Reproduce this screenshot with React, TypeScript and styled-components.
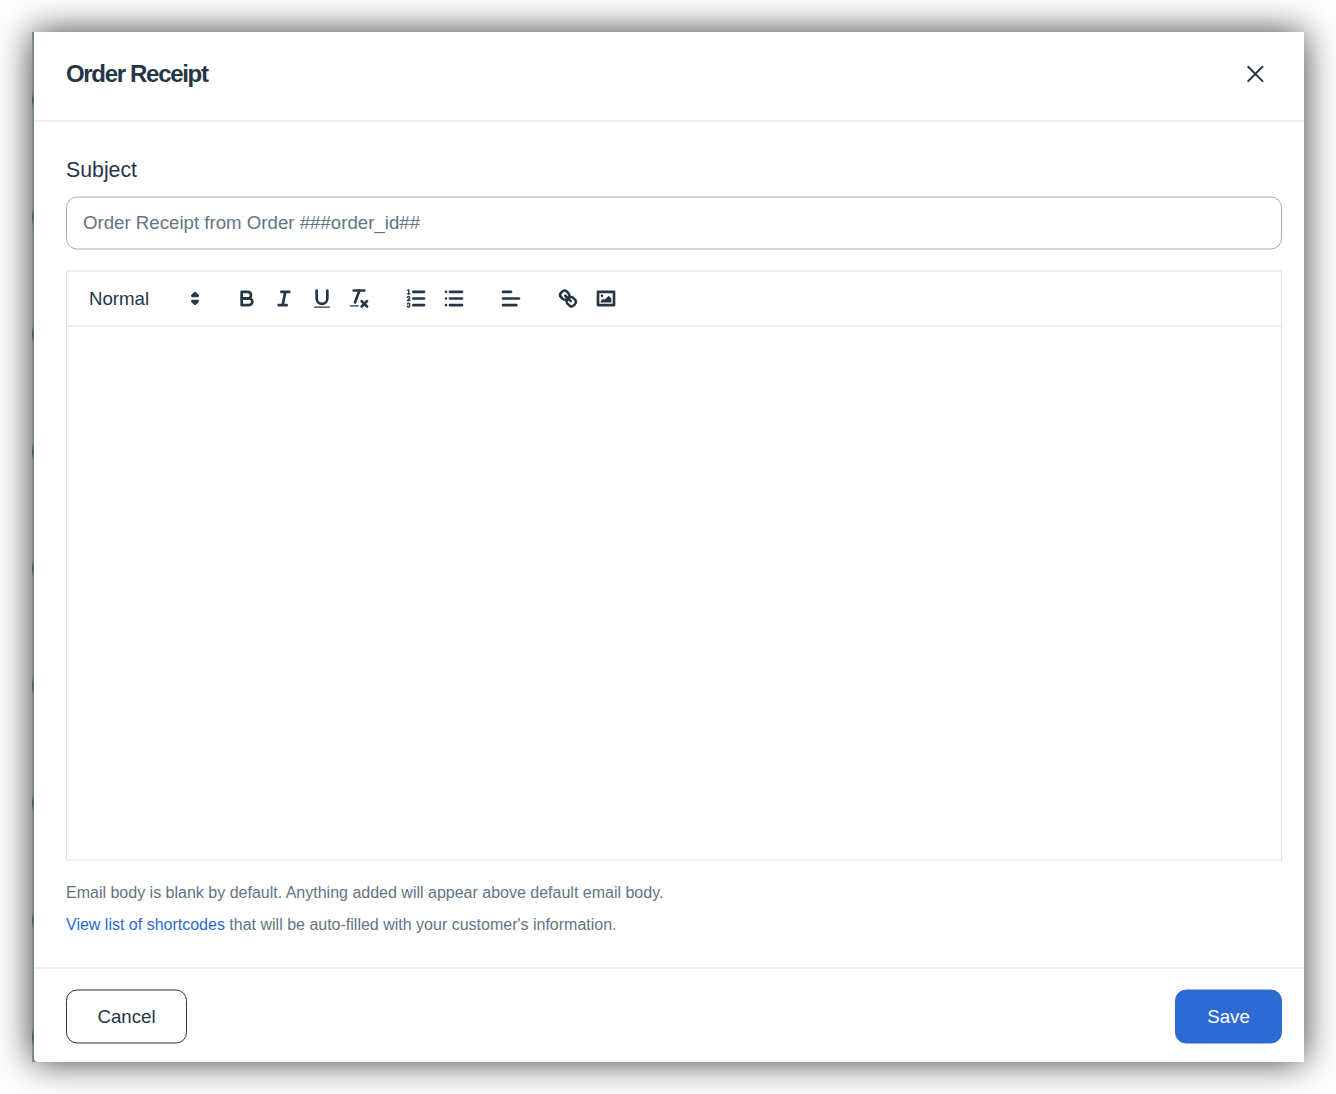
import React from "react";
import styled, { createGlobalStyle } from "styled-components";

const ink = "#263645";
const muted = "#627486";

const GlobalStyle = createGlobalStyle`
  * { box-sizing: border-box; }
  body {
    margin: 0;
    background: #fff;
    overflow: hidden;
    font-family: "Liberation Sans", Arial, Helvetica, sans-serif;
    color: ${ink};
  }
  button { font: inherit; }
`;

const Page = styled.div`
  height: 1094px;
  padding: 32px;
`;

const Backdrop = styled.div`
  height: 1030px;
  padding-left: 2px;
  background:
    radial-gradient(ellipse 3px 9px at 0px 68px, #4b5962 20%, transparent 100%) 0 0 / 2px 117.2px repeat-y,
    #7f888e;
  box-shadow: 0 0 34px rgba(0, 0, 0, 0.77);
`;

const Dialog = styled.section`
  display: flex;
  flex-direction: column;
  height: 100%;
  background: #fff;
  border-radius: 1px 0 0 4px;
`;

const Header = styled.header`
  display: flex;
  align-items: center;
  justify-content: space-between;
  height: 90px;
  padding: 0 38px 4px 32px;
  border-bottom: 2px solid #eeeff1;
`;

const Title = styled.h1`
  margin: 0;
  font-size: 24px;
  line-height: 32px;
  font-weight: 700;
  letter-spacing: -1.32px;
`;

const CloseButton = styled.button`
  display: flex;
  padding: 0;
  border: 0;
  background: none;
  color: ${ink};
`;

const Body = styled.main`
  flex: 1;
  padding: 34px 22px 0 32px;
`;

const Label = styled.label`
  display: block;
  height: 40px;
  font-size: 21.3px;
  line-height: 28px;
`;

const SubjectInput = styled.input`
  display: block;
  width: 100%;
  height: 53px;
  margin-bottom: 21px;
  padding: 0 16px 2px;
  border: 1px solid #a3aeb9;
  border-radius: 11px;
  outline: none;
  background: #fff;
  font: 18.67px "Liberation Sans", Arial, sans-serif;
  color: ${muted};
  transform: translateY(0.5px);
  &::placeholder { color: ${muted}; opacity: 1; }
`;

const Editor = styled.div`
  height: 591px;
  border: solid;
  border-width: 2px 1px;
  border-color: #eeeff1 #dee1e7;
`;

const Toolbar = styled.div`
  display: flex;
  align-items: center;
  height: 55px;
  padding-left: 22px;
  border-bottom: 2px solid #eeeff1;
`;

const FormatPicker = styled.button`
  display: flex;
  align-items: center;
  justify-content: space-between;
  width: 118px;
  margin-right: 21.4px;
  padding: 0;
  border: 0;
  background: none;
  color: ${ink};
  font-size: 18.67px;
`;

const ToolGroup = styled.div`
  display: flex;
  margin-right: 20px;
`;

const ToolButton = styled.button`
  display: flex;
  align-items: center;
  justify-content: center;
  width: 37.34px;
  height: 32px;
  padding: 0;
  border: 0;
  background: none;
  color: ${ink};
`;

const Glyph = styled.svg.attrs({ viewBox: "0 0.4 18 18" })`
  display: block;
  width: 24px;
  height: 24px;
  fill: none;
  stroke: currentColor;
  stroke-width: 2;
  stroke-linecap: round;
  stroke-linejoin: round;
  .fill { fill: currentColor; stroke: none; }
  .both { fill: currentColor; }
  .thin { stroke-width: 1; }
`;

const HelpText = styled.div`
  margin-top: 16px;
  font-size: 16px;
  line-height: 32px;
  color: ${muted};
`;

const HelpLine = styled.p`
  margin: 0;
`;

const HelpLink = styled.a`
  color: #2c68d3;
  text-decoration: none;
`;

const Footer = styled.footer`
  display: flex;
  justify-content: space-between;
  height: 95px;
  padding: 20px 22px 0 32px;
  border-top: 2px solid #eeeff1;
`;

const ActionButton = styled.button<{ $primary?: boolean }>`
  width: ${(p) => (p.$primary ? 107 : 121)}px;
  height: 54px;
  padding: 0;
  border: 1px solid ${(p) => (p.$primary ? "#2d6ad3" : ink)};
  border-radius: 11px;
  background: ${(p) => (p.$primary ? "#2d6ad3" : "#fff")};
  color: ${(p) => (p.$primary ? "#fff" : ink)};
  font-size: 18.67px;
  transform: translateY(0.5px);
`;

const groups: { name: string; art: React.ReactNode }[][] = [
  [
    {
      name: "Bold",
      art: (
        <>
          <path d="M5,4H9.5A2.5,2.5,0,0,1,9.5,9H5Z" />
          <path d="M5,9h5.5A2.5,2.5,0,0,1,10.5,14H5Z" />
        </>
      ),
    },
    { name: "Italic", art: <path d="M7,4H13M5,14H11M8,14L10,4" /> },
    {
      name: "Underline",
      art: (
        <>
          <path d="M5,3V9a4,4,0,0,0,8,0V3" />
          <rect className="fill" x="3" y="15" width="12" height="1" rx=".5" />
        </>
      ),
    },
    {
      name: "Clear formatting",
      art: (
        <>
          <path d="M5,3H13M6,12L9.35,3M11,11L15,15M15,11L11,15" />
          <rect className="fill" x="2" y="14" width="7" height="1" rx=".5" />
        </>
      ),
    },
  ],
  [
    {
      name: "Ordered list",
      art: (
        <>
          <path d="M7,4H15M7,9H15M7,14H15" />
          <path className="thin" d="M2.5,5.5H4.5" />
          <path
            className="fill"
            d="M3.5,6A0.5,0.5,0,0,1,3,5.5V3.085l-0.276.138A0.5,0.5,0,0,1,2.053,3c-0.124-.247-0.023-0.324.224-0.447l1-.5A0.5,0.5,0,0,1,4,2.5v3A0.5,0.5,0,0,1,3.5,6Z"
          />
          <path className="thin" d="M4.5,10.5h-2c0-.234,1.85-1.076,1.85-2.234A0.959,0.959,0,0,0,2.5,8.156" />
          <path
            className="thin"
            d="M2.5,14.846a0.959,0.959,0,0,0,1.85-.109A0.7,0.7,0,0,0,3.75,14a0.688,0.688,0,0,0,.6-0.736,0.959,0.959,0,0,0-1.85-.109"
          />
        </>
      ),
    },
    { name: "Bullet list", art: <path d="M6,4H15M6,9H15M6,14H15M3,4H3.01M3,9H3.01M3,14H3.01" /> },
  ],
  [{ name: "Align", art: <path d="M3,4H9M3,9H15M3,14H13" /> }],
  [
    {
      name: "Link",
      art: (
        <>
          <path d="M7,7L11,11" />
          <path d="M8.9,4.577a3.476,3.476,0,0,1,.36,4.679A3.476,3.476,0,0,1,4.577,8.9C3.185,7.5,2.035,6.4,4.217,4.217S7.5,3.185,8.9,4.577Z" />
          <path d="M13.423,9.1a3.476,3.476,0,0,0-4.679-.36,3.476,3.476,0,0,0,.36,4.679c1.392,1.392,2.5,2.542,4.679.36S14.815,10.5,13.423,9.1Z" />
        </>
      ),
    },
    {
      name: "Image",
      art: (
        <>
          <rect x="3" y="4" width="12" height="10" />
          <circle className="fill" cx="6" cy="7" r="1" />
          <path className="fill" d="M5,12V11L7,9L8,10L11,7L13,9V12Z" />
        </>
      ),
    },
  ],
];

export default function App() {
  return (
    <>
      <GlobalStyle />
      <Page>
        <Backdrop>
          <Dialog role="dialog" aria-labelledby="dialog-title">
            <Header>
              <Title id="dialog-title">Order Receipt</Title>
              <CloseButton aria-label="Close">
                <svg width="21" height="21" viewBox="0 0.4 21 21" fill="none" stroke="currentColor" strokeWidth="2" strokeLinecap="round">
                  <path d="M3.2 3.2 17.5 17.5M17.5 3.2 3.2 17.5" />
                </svg>
              </CloseButton>
            </Header>
            <Body>
              <Label htmlFor="subject">Subject</Label>
              <SubjectInput id="subject" placeholder="Order Receipt from Order ###order_id##" />
              <Editor>
                <Toolbar>
                  <FormatPicker>
                    Normal
                    <Glyph>
                      <path className="both" d="M7,11L9,13L11,11ZM7,7L9,5L11,7Z" />
                    </Glyph>
                  </FormatPicker>
                  {groups.map((tools) => (
                    <ToolGroup key={tools[0].name}>
                      {tools.map((tool) => (
                        <ToolButton key={tool.name} aria-label={tool.name}>
                          <Glyph>{tool.art}</Glyph>
                        </ToolButton>
                      ))}
                    </ToolGroup>
                  ))}
                </Toolbar>
              </Editor>
              <HelpText>
                <HelpLine>
                  Email body is blank by default. Anything added will appear above default email body.
                </HelpLine>
                <HelpLine>
                  <HelpLink>View list of shortcodes</HelpLink> that will be auto-filled with your customer's information.
                </HelpLine>
              </HelpText>
            </Body>
            <Footer>
              <ActionButton>Cancel</ActionButton>
              <ActionButton $primary>Save</ActionButton>
            </Footer>
          </Dialog>
        </Backdrop>
      </Page>
    </>
  );
}
